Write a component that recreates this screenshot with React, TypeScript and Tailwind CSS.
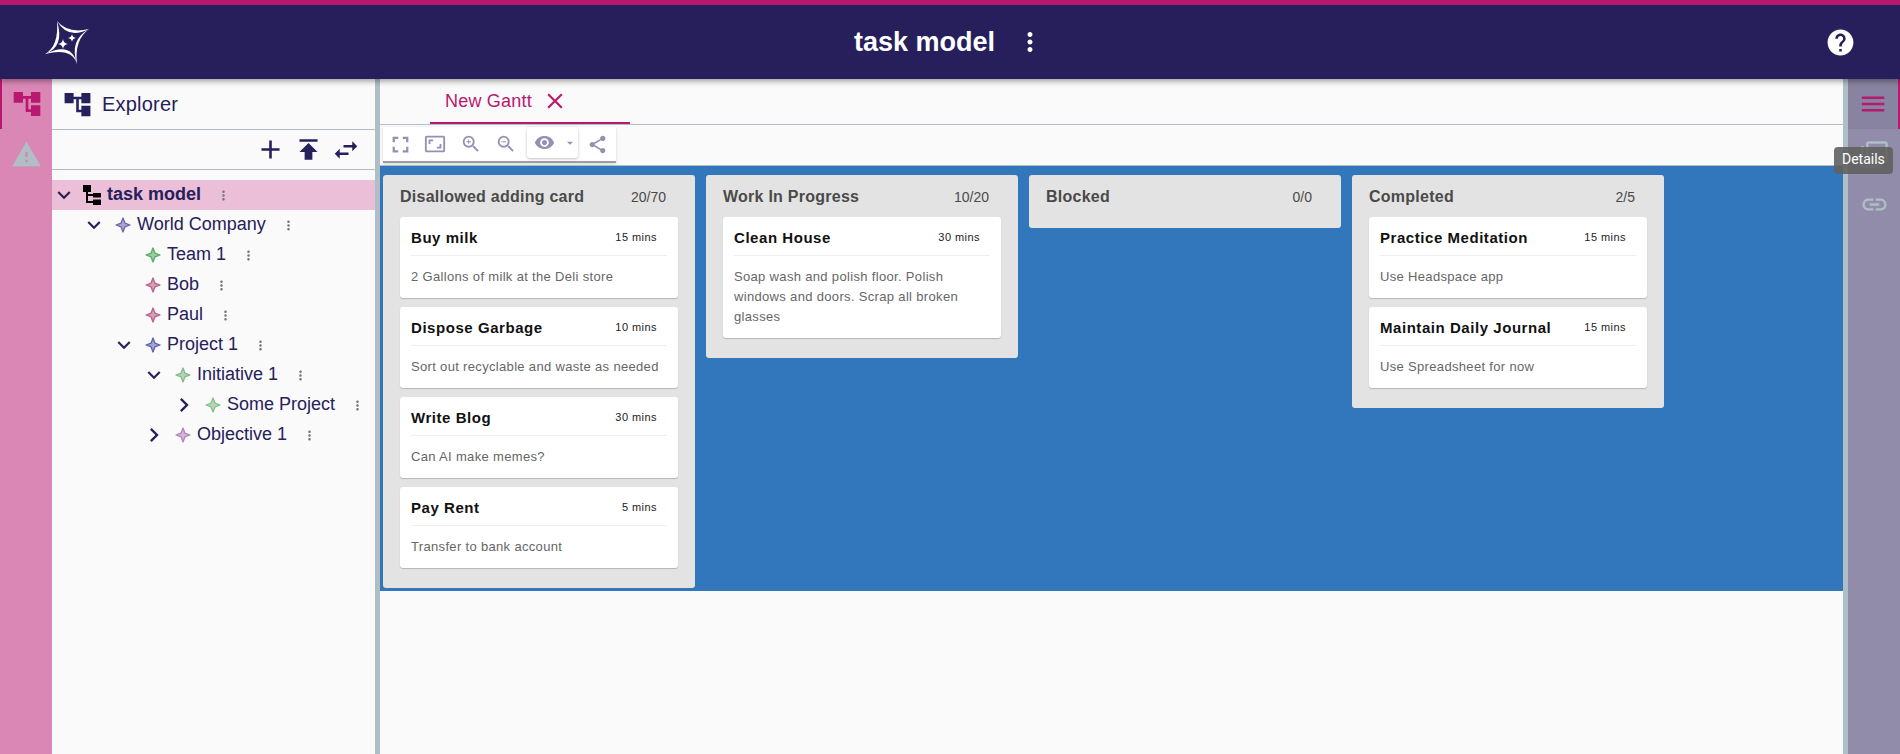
import {
  MdAccountTree,
  MdAdd,
  MdArrowDropDown,
  MdAspectRatio,
  MdChevronRight,
  MdClose,
  MdExpandMore,
  MdFilterNone,
  MdFullscreen,
  MdHelp,
  MdLink,
  MdMenu,
  MdMoreVert,
  MdPublish,
  MdShare,
  MdSwapHoriz,
  MdVisibility,
  MdWarning,
  MdZoomIn,
  MdZoomOut,
} from "react-icons/md"

type Card = { title: string; mins: string; desc: string }
type Lane = { title: string; count: string; cards: Card[] }

const lanes: Lane[] = [
  {
    title: "Disallowed adding card",
    count: "20/70",
    cards: [
      { title: "Buy milk", mins: "15 mins", desc: "2 Gallons of milk at the Deli store" },
      { title: "Dispose Garbage", mins: "10 mins", desc: "Sort out recyclable and waste as needed" },
      { title: "Write Blog", mins: "30 mins", desc: "Can AI make memes?" },
      { title: "Pay Rent", mins: "5 mins", desc: "Transfer to bank account" },
    ],
  },
  {
    title: "Work In Progress",
    count: "10/20",
    cards: [
      {
        title: "Clean House",
        mins: "30 mins",
        desc: "Soap wash and polish floor. Polish windows and doors. Scrap all broken glasses",
      },
    ],
  },
  { title: "Blocked", count: "0/0", cards: [] },
  {
    title: "Completed",
    count: "2/5",
    cards: [
      { title: "Practice Meditation", mins: "15 mins", desc: "Use Headspace app" },
      { title: "Maintain Daily Journal", mins: "15 mins", desc: "Use Spreadsheet for now" },
    ],
  },
]

type Node = {
  label: string
  indent: string
  star: string
  fill: string
  open?: boolean
}

const tree: Node[] = [
  { label: "World Company", indent: "pl-[32px]", star: "#6a66ae", fill: "#a9a7cf", open: true },
  { label: "Team 1", indent: "pl-[62px]", star: "#52ad5c", fill: "#9fc9a4" },
  { label: "Bob", indent: "pl-[62px]", star: "#bf5f8a", fill: "#c9a3b6" },
  { label: "Paul", indent: "pl-[62px]", star: "#bf5f8a", fill: "#c9a3b6" },
  { label: "Project 1", indent: "pl-[62px]", star: "#5d61b4", fill: "#a3a5cf", open: true },
  { label: "Initiative 1", indent: "pl-[92px]", star: "#82ba86", fill: "#b5d3b8", open: true },
  { label: "Some Project", indent: "pl-[122px]", star: "#84c08a", fill: "#b7d6ba", open: false },
  { label: "Objective 1", indent: "pl-[92px]", star: "#b583bd", fill: "#cfb8d3", open: false },
]

function Logo() {
  return (
    <svg width="46" height="44" viewBox="0 0 46 44" fill="#fff" className="ml-[44px]">
      <path d="M13 1Q24 20 45 9Q24 14 13 1Z" />
      <path d="M45 9Q25 20 33 44Q30 20 45 9Z" />
      <path d="M33 44Q28 21 1 34Q28 27 33 44Z" />
      <path d="M1 34Q21 27 13 1Q15 26 1 34Z" />
      <path d="M19 19Q19.6 23.4 24 24Q19.6 24.6 19 29Q18.4 24.6 14 24Q18.4 23.4 19 19Z" />
      <path d="M28 14Q28.4 17.6 32 18Q28.4 18.4 28 22Q27.6 18.4 24 18Q27.6 17.6 28 14Z" />
    </svg>
  )
}

function Star({ color, fill }: { color: string; fill: string }) {
  return (
    <svg width="16" height="16" viewBox="0 0 16 16" className="shrink-0">
      <path
        d="M8 1L9.9 6.1L15 8L9.9 9.9L8 15L6.1 9.9L1 8L6.1 6.1Z"
        fill={fill}
        stroke={color}
        strokeWidth="1.3"
        strokeLinejoin="round"
      />
    </svg>
  )
}

function FileTree() {
  return (
    <svg width="24" height="24" viewBox="0 0 24 24" fill="#000" className="shrink-0">
      <path d="M3 2H11V9H8V11H13V10H21V14.5H13V13H8V18H13V16.5H21V22H13V20H6V9H3Z" />
    </svg>
  )
}

function TreeRow({ node }: { node: Node }) {
  return (
    <div className={`flex h-[30px] items-center ${node.indent}`}>
      <span className="flex w-5 justify-center text-[#26205b]">
        {node.open === true && <MdExpandMore size={26} className="shrink-0" />}
        {node.open === false && <MdChevronRight size={28} className="shrink-0" />}
      </span>
      <span className="ml-[9px] flex w-5 justify-center">
        <Star color={node.star} fill={node.fill} />
      </span>
      <span className="mb-[2px] ml-[4px] text-[18px] text-[#26205b]">{node.label}</span>
      <MdMoreVert size={15} className="ml-[15px] text-[#777]" />
    </div>
  )
}

function Sidebar() {
  return (
    <aside className="flex w-[323px] flex-col bg-[#fafafa]">
      <div className="flex h-[51px] items-center border-b border-[#b0bec5] pl-[10px]">
        <MdAccountTree size={31} className="text-[#26205b]" />
        <span className="ml-[9px] text-[20px] tracking-[0.2px] text-[#26205b]">Explorer</span>
      </div>
      <div className="flex h-[40px] items-center justify-end border-b border-[#b0bec5] pr-[10px] text-[#26205b]">
        <span className="flex w-[38px] justify-center"><MdAdd size={31} /></span>
        <span className="flex w-[38px] justify-center"><MdPublish size={31} /></span>
        <span className="flex w-[38px] justify-center"><MdSwapHoriz size={30} /></span>
      </div>
      <div className="pt-[10px]">
        <div className="flex h-[30px] items-center bg-[#ebbfd8] pl-[2px]">
          <span className="flex w-5 justify-center text-[#26205b]">
            <MdExpandMore size={26} className="shrink-0" />
          </span>
          <span className="ml-2 flex w-5 justify-center"><FileTree /></span>
          <span className="mb-[2px] ml-[5px] text-[18px] font-bold text-[#26205b]">task model</span>
          <MdMoreVert size={15} className="ml-[15px] text-[#777]" />
        </div>
        {tree.map((node) => (
          <TreeRow key={node.label} node={node} />
        ))}
      </div>
    </aside>
  )
}

function Toolbar() {
  return (
    <div className="h-[41px] border-b border-[#b0bec5] bg-[#fafafa] pl-[3px] pt-[2px]">
      <div className="flex h-[36px] w-[233px] border-b-2 border-[#9e9e9e] bg-white text-[#9590b3] shadow-[0_1px_3px_rgba(0,0,0,0.15)]">
        <span className="flex w-[34px] items-center justify-center"><MdFullscreen size={27} /></span>
        <span className="flex w-[36px] items-center justify-center"><MdAspectRatio size={22} /></span>
        <span className="flex w-[35px] items-center justify-center"><MdZoomIn size={22} /></span>
        <span className="flex w-[35px] items-center justify-center"><MdZoomOut size={22} /></span>
        <span className="ml-[4px] flex h-[31px] w-[51px] items-center rounded-[3px] bg-white pl-[7px] shadow-[0_1px_3px_rgba(0,0,0,0.25)]">
          <MdVisibility size={21} />
          <MdArrowDropDown size={14} className="ml-[8px]" />
        </span>
        <span className="flex w-[38px] items-center justify-center"><MdShare size={21} /></span>
      </div>
    </div>
  )
}

function Board() {
  return (
    <div className="flex items-start gap-[11px] bg-[#3277bb] pb-[3px] pl-[3px] pt-[9px]">
      {lanes.map((lane) => (
        <section key={lane.title} className="w-[312px] rounded-[3px] bg-[#e3e3e3] pb-[11px] pl-[17px] pr-[17px]">
          <header className="flex h-[42px] items-center justify-between pr-[12px] pt-[2px]">
            <span className="text-[16px] font-bold tracking-[0.25px] text-[#4a4a4a]">{lane.title}</span>
            <span className="text-[14px] text-[#4a4a4a]">{lane.count}</span>
          </header>
          {lane.cards.map((card) => (
            <article key={card.title} className="mb-[9px] rounded-[3px] bg-white px-[11px] shadow-[0_1px_1px_rgba(0,0,0,0.2)]">
              <div className="flex h-[39px] items-center justify-between border-b border-[#eee] pr-[10px]">
                <span className="mt-[3px] text-[15px] font-bold leading-none tracking-[0.55px] text-[#111]">{card.title}</span>
                <span className="mt-[3px] text-[11px] tracking-[0.45px] text-[#222]">{card.mins}</span>
              </div>
              <p className="pb-[11px] pt-[11px] text-[13px] leading-[20px] tracking-[0.33px] text-[#666]">{card.desc}</p>
            </article>
          ))}
        </section>
      ))}
    </div>
  )
}

export default function App() {
  return (
    <div className="flex h-screen flex-col overflow-hidden bg-[#fafafa] font-['Liberation_Sans',Arial,sans-serif]">
      <header className="relative z-10 flex h-[79px] shrink-0 items-center border-t-[5px] border-[#b9186f] bg-[#261f5b] text-white shadow-[0_2px_6px_rgba(0,0,0,0.4)]">
        <div className="w-[854px] shrink-0"><Logo /></div>
        <span className="text-[27px] font-bold">task model</span>
        <MdMoreVert size={30} className="ml-[20px]" />
        <div className="flex flex-1 justify-end pr-[44px]">
          <MdHelp size={31} />
        </div>
      </header>

      <div className="flex min-h-0 flex-1">
        <nav className="flex w-[52px] shrink-0 flex-col bg-[#db87b6]">
          <span className="flex h-[50px] items-center justify-center border-l-2 border-[#b9186f] text-[#b9186f]">
            <MdAccountTree size={32} />
          </span>
          <span className="flex h-[50px] items-center justify-center text-[#b0bec5]">
            <MdWarning size={31} />
          </span>
        </nav>

        <Sidebar />
        <div className="w-[5px] shrink-0 bg-[#b0bec5]" />

        <main className="min-w-0 flex-1">
          <div className="h-[46px] border-b border-[#b0bec5] pl-[50px]">
            <div className="flex h-[45px] w-[200px] items-center border-b-2 border-[#b9186f] pl-[15px] text-[#b9186f]">
              <span className="mt-[1px] text-[18px] tracking-[0.2px]">New Gantt</span>
              <MdClose size={26} className="ml-[10px]" />
            </div>
          </div>
          <Toolbar />
          <Board />
        </main>

        <div className="w-[5px] shrink-0 bg-[#b0bec5]" />

        <nav className="relative flex w-[52px] shrink-0 flex-col bg-[#918ca9] text-[#b0bec5]">
          <span className="flex h-[50px] items-center justify-center border-r-2 border-[#b9186f] bg-[#8883a1] text-[#b9186f]">
            <MdMenu size={30} />
          </span>
          <span className="flex h-[50px] items-center justify-center"><MdFilterNone size={29} /></span>
          <span className="flex h-[50px] items-center justify-center"><MdLink size={29} /></span>
          <div className="absolute left-[-14px] top-[68px] rounded-[4px] bg-[#616161]/90 px-[8px] pb-[6px] pt-[4px] font-['Roboto',sans-serif] text-[14px] leading-[17px] text-white">
            Details
          </div>
        </nav>
      </div>
    </div>
  )
}
